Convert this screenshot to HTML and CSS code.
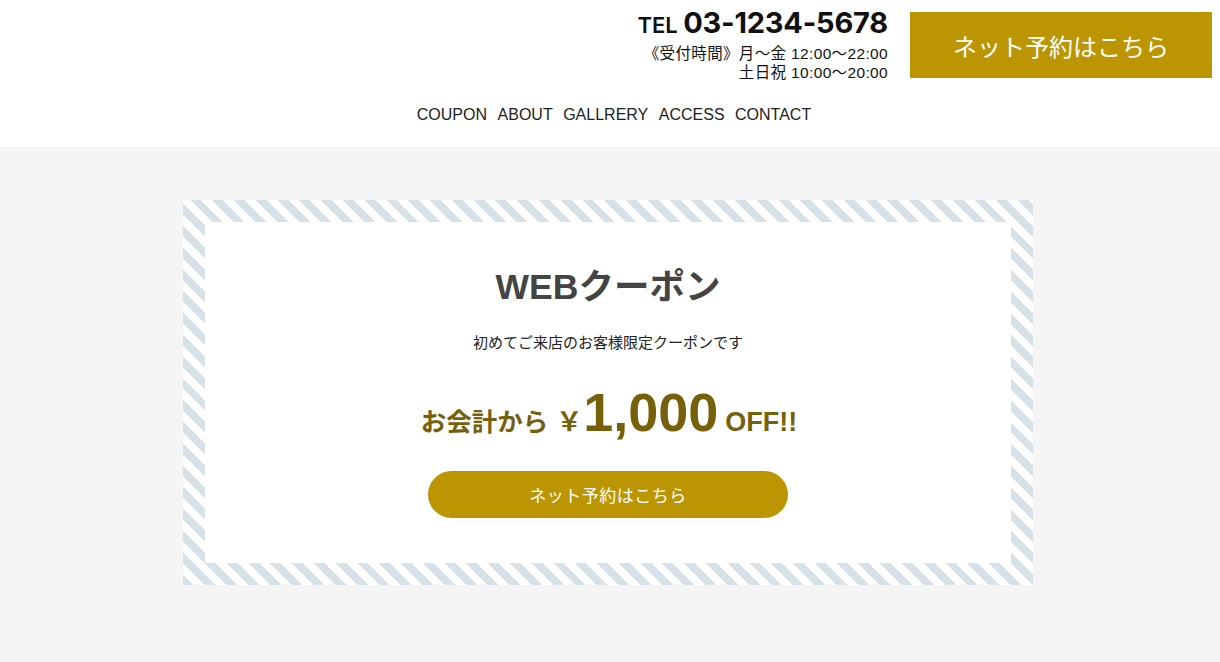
FILE: index.html
```html
<!DOCTYPE html>
<html lang="ja">
<head>
<meta charset="utf-8">
<link rel="stylesheet" href="styles.css">
</head>
<body>
<header class="header">
  <div class="top">
    <div class="contact">
      <div class="tel"><span class="tel-label">TEL</span> <span class="tel-num">03-1234-5678</span></div>
      <div class="hours">《受付時間》月〜金 12:00〜22:00</div>
      <div class="hours">土日祝 10:00〜20:00</div>
    </div>
    <a class="reserve" href="#">ネット予約はこちら</a>
  </div>
  <nav class="nav">
    <a href="#">COUPON</a>
    <a href="#">ABOUT</a>
    <a href="#">GALLRERY</a>
    <a href="#">ACCESS</a>
    <a href="#">CONTACT</a>
  </nav>
</header>
<main class="main">
  <section class="coupon">
    <div class="coupon-inner">
      <h1 class="coupon-title">WEBクーポン</h1>
      <p class="coupon-sub">初めてご来店のお客様限定クーポンです</p>
      <p class="price"><span class="price-pre">お会計から</span><span class="price-yen">￥</span><span class="price-num">1,000</span><span class="price-off">OFF!!</span></p>
      <a class="pill" href="#">ネット予約はこちら</a>
    </div>
  </section>
</main>
</body>
</html>
```
FILE: styles.css
```css
* { box-sizing: border-box; }
html, body { margin: 0; padding: 0; }
body {
  font-family: "Liberation Sans", "Noto Sans CJK JP", sans-serif;
  background: #f5f5f5;
  color: #222;
  height: 662px;
  overflow: hidden;
}
a { text-decoration: none; }
.header {
  background: #fff;
  height: 148px;
  border-bottom: 1px solid #ececec;
  display: flex;
  flex-direction: column;
}
.top {
  display: flex;
  justify-content: flex-end;
  align-items: flex-start;
  gap: 22px;
  padding: 12px 8px 0 0;
}
.contact {
  text-align: right;
  color: #111;
}
.tel {
  line-height: 26px;
  margin-top: -2px;
  height: 34px;
  white-space: nowrap;
}
.tel-label {
  font-family: Inter, "Liberation Sans", sans-serif;
  font-size: 22px;
  font-weight: 600;
  margin-right: 1px;
}
.tel-num {
  font-family: Inter, "Liberation Sans", sans-serif;
  font-size: 29px;
  font-weight: 700;
  letter-spacing: -0.2px;
  color: #111;
}
.hours {
  font-size: 15.5px;
  line-height: 19px;
  letter-spacing: 0.35px;
  color: #111;
  white-space: nowrap;
}
.reserve {
  display: flex;
  align-items: center;
  justify-content: center;
  width: 302px;
  height: 66px;
  background: #bc9502;
  color: #fff;
  font-family: "Noto Sans CJK JP", sans-serif;
  font-size: 24px;
}
.nav {
  display: flex;
  justify-content: center;
  gap: 10.5px;
  margin-top: 22px;
  padding-left: 8px;
}
.nav a {
  font-family: "Liberation Sans", Arial, sans-serif;
  font-size: 16px;
  line-height: 22px;
  color: #222;
}
.main {
  padding-top: 52px;
  display: flex;
  justify-content: center;
}
.coupon {
  width: 850px;
  height: 385px;
  margin-right: 4px;
  padding: 22px;
  background: repeating-linear-gradient(45deg, #d6e2e8 0 7.7px, #ffffff 7.7px 15.4px);
}
.coupon-inner {
  background: #fff;
  height: 100%;
  display: flex;
  flex-direction: column;
  align-items: center;
  padding-top: 40px;
}
.coupon-title {
  margin: 0;
  font-size: 35.5px;
  font-weight: 700;
  line-height: 50px;
  color: #444;
}
.coupon-sub {
  margin: 20px 0 0;
  font-size: 15px;
  line-height: 22px;
  color: #222;
}
.price {
  margin: 28px 0 0;
  color: #77600a;
  font-weight: 700;
  display: flex;
  align-items: baseline;
  line-height: 60px;
  padding-left: 2px;
}
.price-pre {
  font-family: "Noto Sans CJK JP", sans-serif;
  font-size: 25.5px;
  margin-right: 8px;
}
.price-yen {
  font-family: "Noto Sans CJK JP", sans-serif;
  font-size: 26px;
}
.price-num {
  font-size: 54px;
  margin: 0 7px 0 1px;
}
.price-off {
  font-size: 27px;
}
.pill {
  margin-top: 19px;
  width: 360px;
  height: 47px;
  border-radius: 24px;
  background: #bc9502;
  color: #fff;
  display: flex;
  align-items: center;
  justify-content: center;
  font-family: "Noto Sans CJK JP", sans-serif;
  font-size: 17px;
  letter-spacing: 0.5px;
}
```
